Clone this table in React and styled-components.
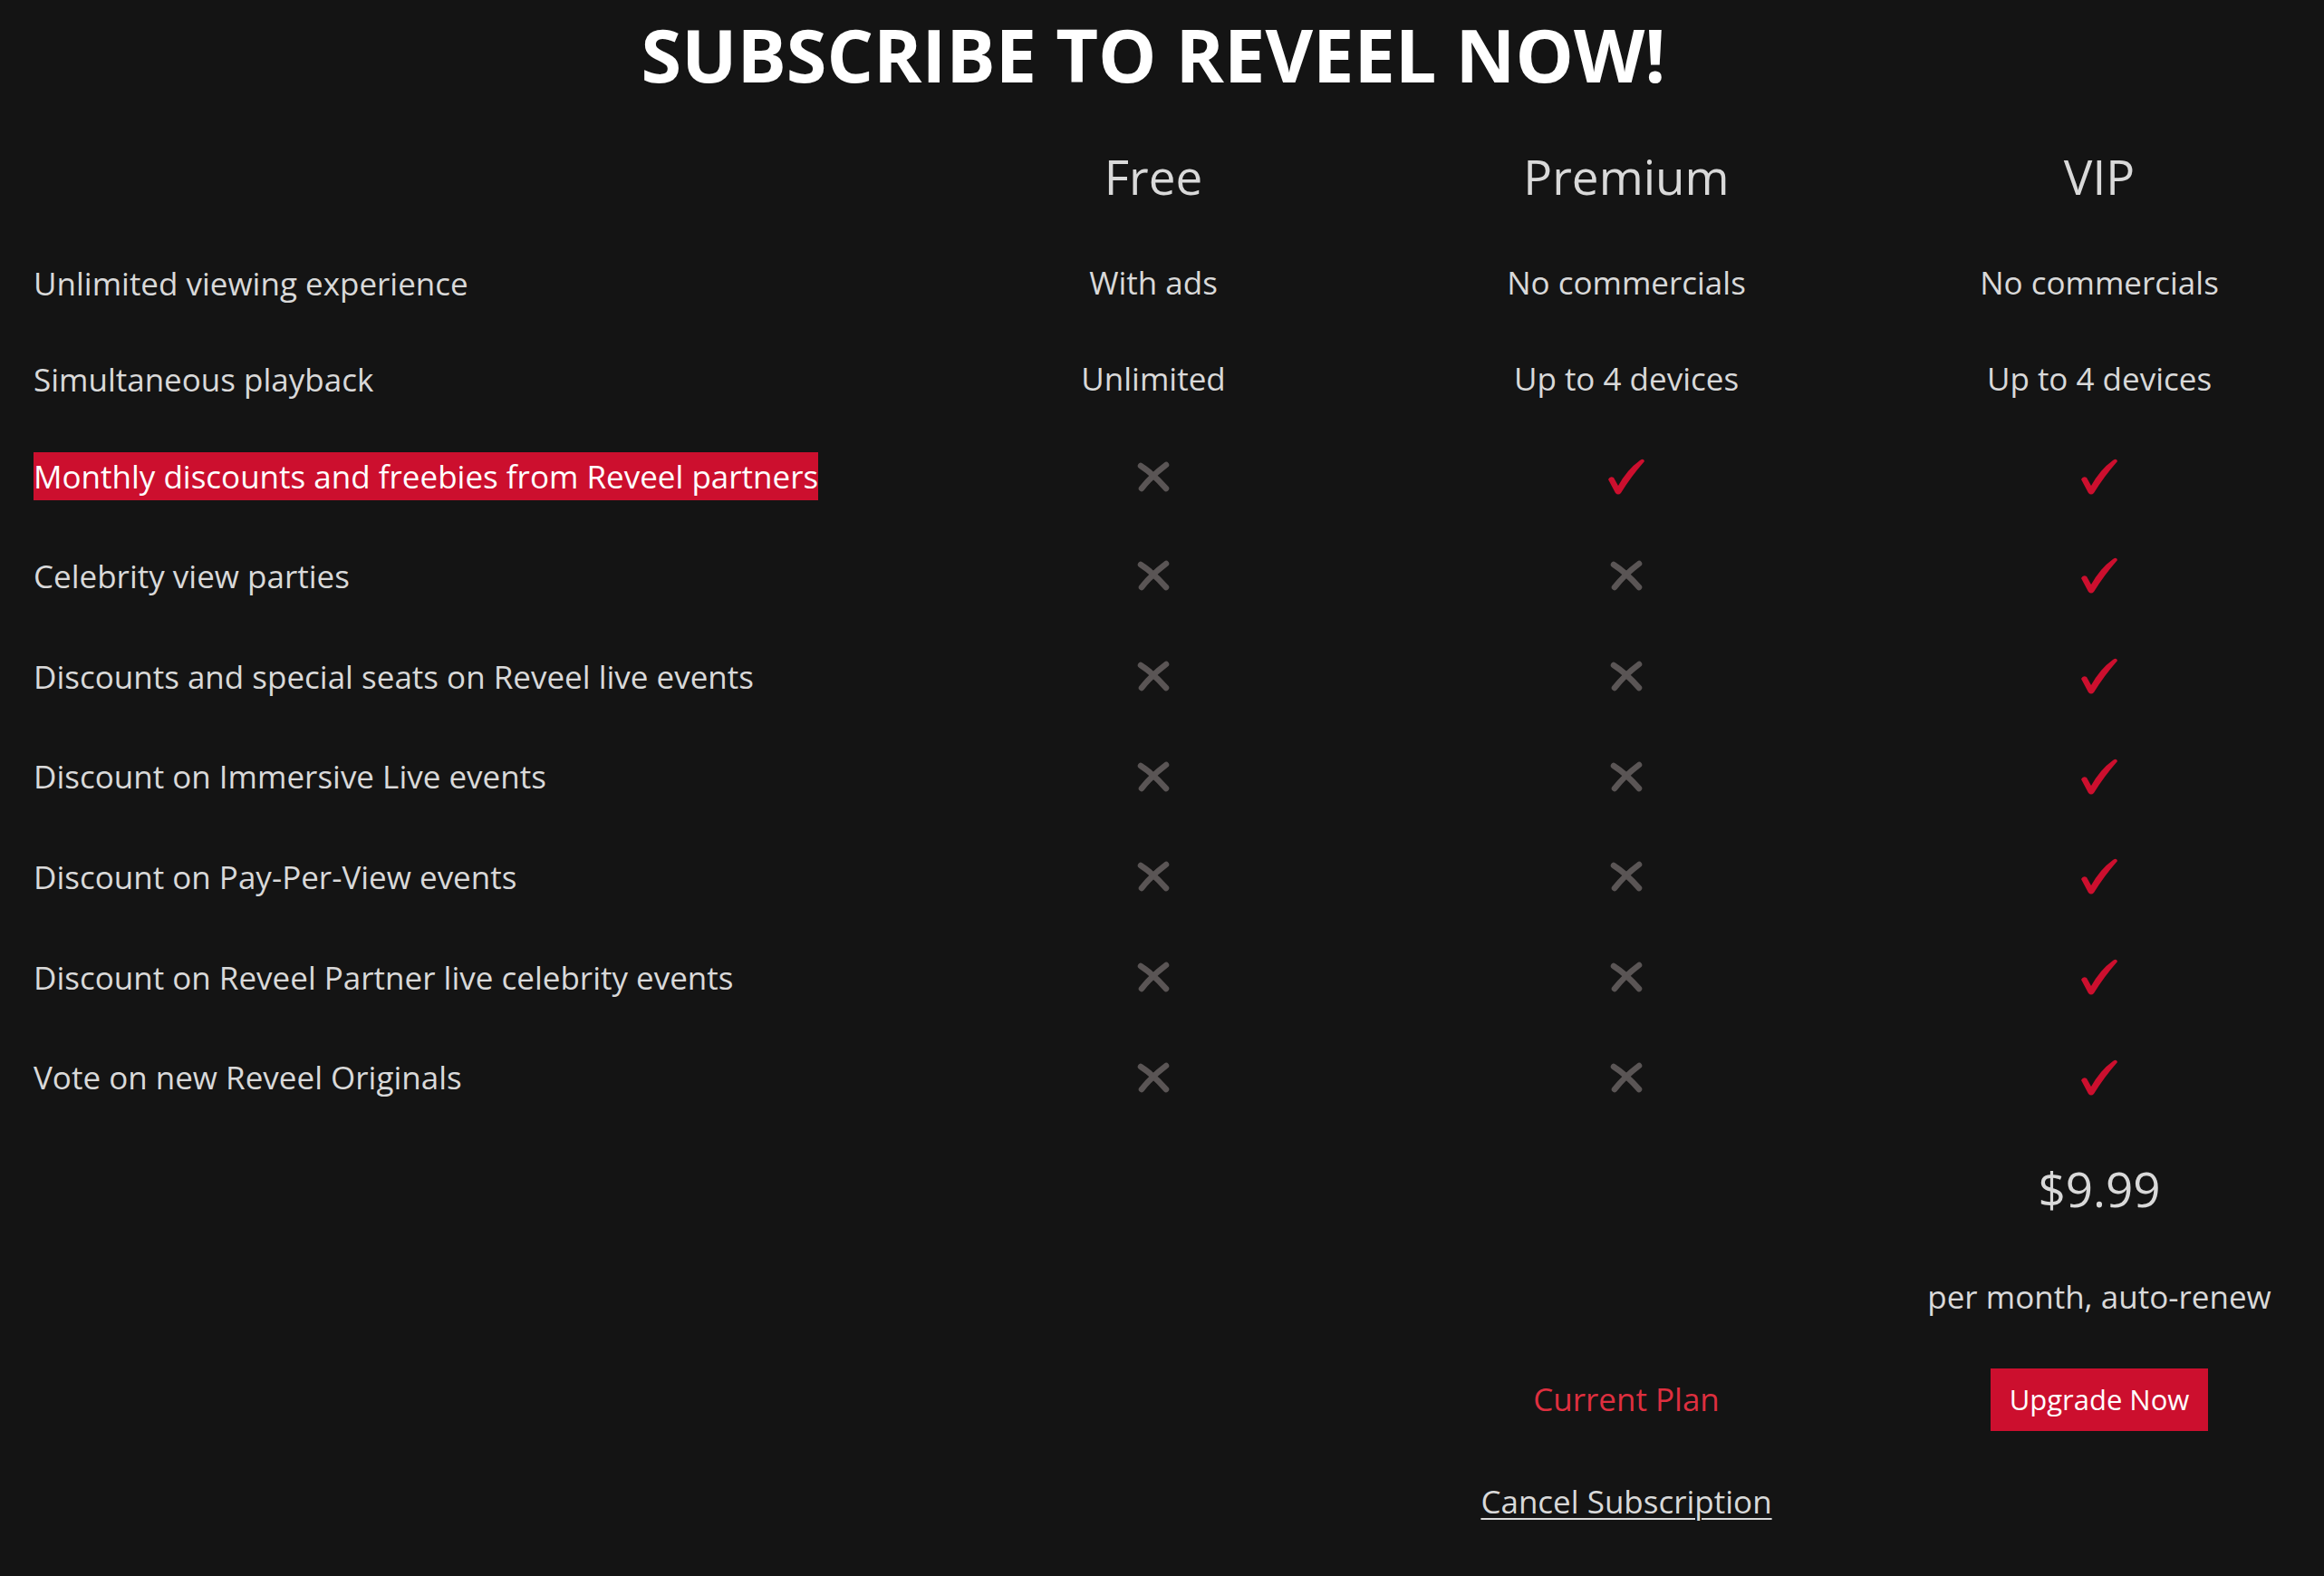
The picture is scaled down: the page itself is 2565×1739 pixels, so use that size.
import styled, { createGlobalStyle } from 'styled-components'

const GlobalStyle = createGlobalStyle`
   html, body {
      margin: 0;
      padding: 0;
      background: #141414;
   }
   body {
      font-family: 'Open Sans', 'Noto Sans', sans-serif;
      color: #d9d9d9;
      overflow-x: hidden;
   }
`

const RED = '#cc0f2e'

const plans = ['Free', 'Premium', 'VIP']

const features = [
   { label: 'Unlimited viewing experience', values: ['With ads', 'No commercials', 'No commercials'], h: 106 },
   { label: 'Simultaneous playback', values: ['Unlimited', 'Up to 4 devices', 'Up to 4 devices'], h: 106 },
   { label: 'Monthly discounts and freebies from Reveel partners', values: [false, true, true], h: 109, highlight: true },
   { label: 'Celebrity view parties', values: [false, false, true], h: 110.7 },
   { label: 'Discounts and special seats on Reveel live events', values: [false, false, true], h: 110.7 },
   { label: 'Discount on Immersive Live events', values: [false, false, true], h: 110.7 },
   { label: 'Discount on Pay-Per-View events', values: [false, false, true], h: 110.7 },
   { label: 'Discount on Reveel Partner live celebrity events', values: [false, false, true], h: 110.7 },
   { label: 'Vote on new Reveel Originals', values: [false, false, true], h: 110.7 },
]

const Check = () => (
   <svg width='44' height='42' viewBox='0 0 44 42'>
      <path
         d='M2 24 Q4 20 8 22 L13 31 Q23 13 37 3 Q41 0 42 4 Q27 21 16 39 Q13 42 10 39 Z'
         fill={RED}
      />
   </svg>
)

const Cross = () => (
   <svg width='38' height='36' viewBox='0 0 38 36'>
      <g stroke='#5a5555' strokeWidth='6.5' strokeLinecap='round' fill='none'>
         <path d='M5 6 Q19 15 33 31' />
         <path d='M33 5 Q17 17 6 31' />
      </g>
   </svg>
)

const App = () => {
   return (
      <Page>
         <GlobalStyle />
         <TitleBar>
            <h1>SUBSCRIBE TO REVEEL NOW!</h1>
         </TitleBar>
         <Row h={127}>
            <span />
            {plans.map((p) => (
               <PlanName key={p}>{p}</PlanName>
            ))}
         </Row>
         {features.map((f) => (
            <Row key={f.label} h={f.h}>
               <Label highlight={f.highlight}>{f.label}</Label>
               {f.values.map((v, i) => (
                  <Cell key={i}>
                     {typeof v === 'string' ? v : v ? <Check /> : <Cross />}
                  </Cell>
               ))}
            </Row>
         ))}
         <Row h={136}>
            <span />
            <span />
            <span />
            <Price>$9.99</Price>
         </Row>
         <Row h={102}>
            <span />
            <span />
            <span />
            <Cell>per month, auto-renew</Cell>
         </Row>
         <Row h={124}>
            <span />
            <span />
            <CurrentPlan>Current Plan</CurrentPlan>
            <Cell>
               <UpgradeButton>Upgrade Now</UpgradeButton>
            </Cell>
         </Row>
         <Row h={102}>
            <span />
            <span />
            <Cell>
               <CancelLink href='#'>Cancel Subscription</CancelLink>
            </Cell>
            <span />
         </Row>
      </Page>
   )
}

export default App

const Page = styled.main`
   min-height: 1739px;
   padding: 0 8px 30px 37px;
   box-sizing: border-box;
   background: #141414;
`

const TitleBar = styled.header`
   height: 132px;
   padding: 0 48px 12px 0;
   box-sizing: border-box;
   display: flex;
   align-items: center;
   justify-content: center;
   h1 {
      margin: 0;
      font-size: 81px;
      font-weight: 700;
      color: #ffffff;
      line-height: 1.2;
   }
`

const Row = styled.div`
   display: grid;
   grid-template-columns: 954px 480px 480px 480px;
   column-gap: 42px;
   align-items: center;
   height: ${(p) => p.h}px;
`

const Cell = styled.div`
   display: flex;
   justify-content: center;
   align-items: center;
   font-size: 35px;
   line-height: 1.3;
   color: #d9d9d9;
   white-space: nowrap;
`

const PlanName = styled(Cell)`
   font-size: 53px;
`

const Label = styled.div`
   justify-self: start;
   font-size: 35px;
   line-height: 53px;
   white-space: nowrap;
   color: ${(p) => (p.highlight ? '#ffffff' : '#d9d9d9')};
   background: ${(p) => (p.highlight ? RED : 'transparent')};
`

const Price = styled(Cell)`
   font-size: 53px;
`

const CurrentPlan = styled(Cell)`
   color: #de2f3f;
`

const UpgradeButton = styled.button`
   width: 240px;
   height: 69px;
   border: 0;
   border-radius: 0;
   background: ${RED};
   color: #ffffff;
   font-family: 'Open Sans', sans-serif;
   font-size: 31px;
   padding: 0;
   cursor: pointer;
`

const CancelLink = styled.a`
   color: #d9d9d9;
   font-size: 35px;
   text-decoration: underline;
   text-underline-offset: 5px;
   text-decoration-thickness: 2px;
`
